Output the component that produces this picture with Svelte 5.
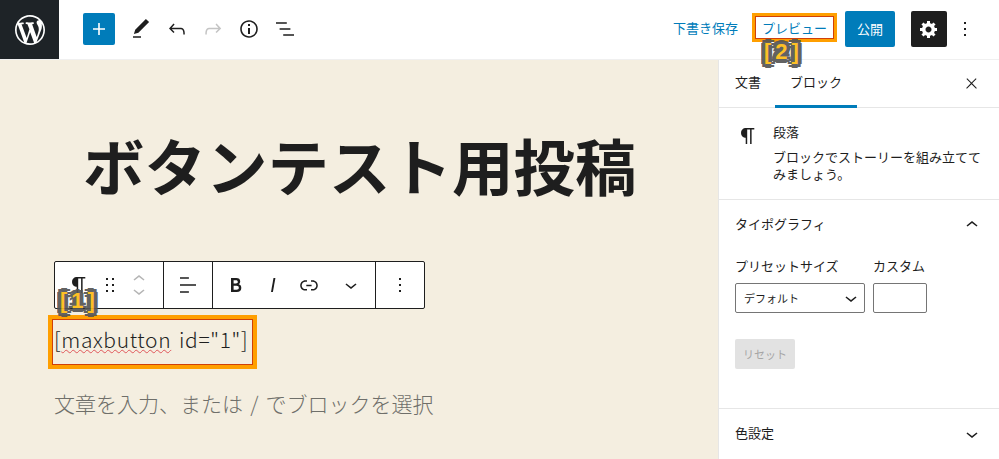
<script>
  const icons = {
    plus: "M18 11.2h-5.2V6h-1.6v5.2H6v1.6h5.2V18h1.6v-5.2H18z",
    pencil: "M20.1 5.1L16.9 2 6.2 12.7l-1.3 4.4 4.5-1.3L20.1 5.1zM4 20.8h8v-1.5H4v1.5z",
    undo: "M18.3 11.7c-.6-.6-1.4-.9-2.3-.9H6.7l2.9-3.3-1.1-1-4.5 5L8.5 16l1-1-2.7-2.7H16c.5 0 .9.2 1.3.5 1 1 1 3.4 1 4.5v.3h1.5v-.2c0-1.5 0-4.3-1.5-5.7z",
    redo: "M15.6 6.5l-1.1 1 2.9 3.3H8c-.9 0-1.7.3-2.3.9-1.4 1.5-1.4 4.2-1.4 5.6v.2h1.5v-.3c0-1.1 0-3.5 1-4.5.3-.3.7-.5 1.3-.5h9.2L14.5 15l1.1 1.1 4.6-4.6-4.6-5z",
    info: "M12 3.2c-4.8 0-8.8 3.9-8.8 8.8 0 4.8 3.9 8.8 8.8 8.8 4.8 0 8.8-3.9 8.8-8.8 0-4.8-4-8.8-8.8-8.8zm0 16c-4 0-7.2-3.3-7.2-7.2C4.8 8 8 4.8 12 4.8s7.2 3.3 7.2 7.2c0 4-3.2 7.2-7.2 7.2zM11 17h2v-6h-2v6zm0-8h2V7h-2v2z",
    list: "M13.8 5.2H3v1.5h10.8V5.2zm-3.6 12v1.5H21v-1.5H10.2zm7.2-6H6.6v1.5h10.8v-1.5z",
    more: "M13 19h-2v-2h2v2zm0-6h-2v-2h2v2zm0-6h-2V5h2v2z",
    close: "M13 11.8l6.1-6.3-1-1-6.1 6.2-6.1-6.2-1 1 6.1 6.3-6.5 6.7 1 1 6.5-6.6 6.5 6.6 1-1z",
    down: "M17.5 11.6L12 16l-5.5-4.4.9-1.2L12 14l4.5-3.6 1 1.2z",
    up: "M6.5 12.4L12 8l5.5 4.4-.9 1.2L12 10l-4.5 3.6-1-1.2z",
    para: "M18.3 4H9.9v-.1l-.9.2c-2.3.4-4 2.4-4 4.8s1.7 4.4 4 4.8l.7.1V20h1.5V5.5h2.9V20h1.5V5.5h2.7V4z",
    drag: "M8 7h2V5H8v2zm0 6h2v-2H8v2zm0 6h2v-2H8v2zm6-14v2h2V5h-2zm0 8h2v-2h-2v2zm0 6h2v-2h-2v2z",
    align: "M4 19.8h8.9v-1.5H4v1.5zm8.9-15.6H4v1.5h8.9V4.2zm-8.9 7v1.5h16v-1.5H4z",
    bold: "M14.7 11.3c1-.6 1.5-1.6 1.5-3 0-2.3-1.3-3.4-4-3.4H7v14h5.8c1.4 0 2.5-.3 3.3-1 .8-.7 1.2-1.7 1.2-2.9.1-1.9-.8-3.1-2.6-3.7zm-5.1-4h2.3c.6 0 1.1.1 1.4.4.3.3.5.7.5 1.2s-.2 1-.5 1.2c-.3.3-.8.4-1.4.4H9.6V7.3zm4.6 9c-.4.3-1 .4-1.7.4H9.6v-3.9h2.9c.7 0 1.3.2 1.7.5.4.3.6.8.6 1.5s-.2 1.2-.6 1.5z",
    italic: "M12.5 5L10 19h1.9l2.5-14z",
    link: "M15.6 7.2H14v1.5h1.6c2 0 3.7 1.7 3.7 3.7s-1.7 3.7-3.7 3.7H14v1.5h1.6c2.8 0 5.2-2.3 5.2-5.2 0-2.9-2.3-5.2-5.2-5.2zM4.7 12.4c0-2 1.7-3.7 3.7-3.7H10V7.2H8.4c-2.9 0-5.2 2.3-5.2 5.2 0 2.9 2.3 5.2 5.2 5.2H10v-1.5H8.4c-2 0-3.7-1.7-3.7-3.7zm4.6.9h5.3v-1.5H9.3v1.5z",
  };
</script>

{#snippet icon(name, size = 24)}
  <svg width={size} height={size} viewBox="0 0 24 24" fill="currentColor"><path d={icons[name]} /></svg>
{/snippet}

<div class="screen">
  <header class="topbar">
    <a class="logo" href="#top" aria-label="WordPress">
      <svg width="30" height="30" viewBox="0 0 20 20" fill="#fff"><path d="M20 10c0-5.51-4.49-10-10-10C4.48 0 0 4.49 0 10c0 5.52 4.48 10 10 10 5.51 0 10-4.48 10-10zM7.78 15.37L4.37 6.22c.55-.02 1.17-.08 1.17-.08.5-.06.44-1.13-.06-1.11 0 0-1.45.11-2.37.11-.18 0-.37 0-.58-.01C4.12 2.69 6.87 1.11 10 1.11c2.33 0 4.45.87 6.05 2.34-.68-.11-1.65.39-1.65 1.58 0 .74.45 1.36.9 2.1.35.61.55 1.36.55 2.46 0 1.49-1.4 5-1.4 5l-3.03-8.37c.54-.02.82-.17.82-.17.5-.05.44-1.25-.06-1.22 0 0-1.44.12-2.38.12-.87 0-2.33-.12-2.33-.12-.5-.03-.56 1.2-.06 1.22l.92.08 1.26 3.41zM17.41 10c.24-.64.74-1.87.43-4.25.7 1.29 1.05 2.71 1.05 4.25 0 3.29-1.73 6.24-4.4 7.78.97-2.59 1.94-5.2 2.92-7.78zM6.1 18.09C3.12 16.65 1.11 13.53 1.11 10c0-1.3.23-2.48.72-3.59C3.25 10.3 4.67 14.2 6.1 18.09zm4.03-6.63l2.58 6.98c-.86.29-1.76.45-2.71.45-.79 0-1.57-.11-2.29-.33.81-2.38 1.62-4.74 2.42-7.1z" /></svg>
    </a>
    <div class="tools">
      <button class="inserter">{@render icon("plus")}</button>
      <button class="tool">{@render icon("pencil")}</button>
      <button class="tool">{@render icon("undo")}</button>
      <button class="tool off">{@render icon("redo")}</button>
      <button class="tool">{@render icon("info")}</button>
      <button class="tool">{@render icon("list")}</button>
    </div>
    <div class="actions">
      <span class="draft">下書き保存</span>
      <span class="preview"><span class="preview-text">プレビュー</span>
        <span class="tag tag-2">[2]</span>
      </span>
      <button class="publish"><span>公開</span></button>
      <button class="settings">
        <svg width="20" height="20" viewBox="0 0 20 20" fill="currentColor"><path d="M18 12h-2.18c-.17.7-.44 1.35-.81 1.93l1.54 1.54-2.1 2.1-1.54-1.54c-.58.36-1.23.63-1.91.79V19H8v-2.18c-.68-.16-1.33-.43-1.91-.79l-1.54 1.54-2.12-2.12 1.54-1.54c-.36-.58-.63-1.23-.79-1.91H1V9.03h2.17c.16-.7.44-1.35.8-1.94L2.43 5.55l2.1-2.1 1.54 1.54c.58-.37 1.24-.64 1.93-.81V2h3v2.18c.68.16 1.33.43 1.91.79l1.54-1.54 2.12 2.12-1.54 1.54c.36.59.64 1.24.8 1.94H18V12zm-8.5 1.5c1.66 0 3-1.34 3-3s-1.34-3-3-3-3 1.34-3 3 1.34 3 3 3z" /></svg>
      </button>
      <button class="tool more">{@render icon("more")}</button>
    </div>
  </header>

  <div class="body">
    <main class="editor">
      <h1 class="title">ボタンテスト用投稿</h1>

      <div class="block-toolbar">
        <div class="group first">
          <span class="para">{@render icon("para")}</span>
          <span class="drag">{@render icon("drag")}</span>
          <span class="movers">
            {@render icon("up")}
            {@render icon("down")}
          </span>
        </div>
        <div class="group align">{@render icon("align")}</div>
        <div class="group formats">
          {@render icon("bold")}
          {@render icon("italic")}
          {@render icon("link")}
          <span class="format-more">{@render icon("down")}</span>
        </div>
        <div class="group last">{@render icon("more")}</div>
        <span class="tag tag-1">[1]</span>
      </div>

      <div class="shortcode">[<span class="misspelt">maxbutton</span> id="1"]</div>
      <p class="placeholder">文章を入力、または / でブロックを選択</p>
    </main>

    <aside class="sidebar">
      <div class="tabs">
        <span class="tab doc">文書</span>
        <span class="tab active">ブロック</span>
        <span class="tab-close">{@render icon("close", 17)}</span>
      </div>

      <section class="card">
        <span class="card-icon">{@render icon("para")}</span>
        <div>
          <div class="card-title">段落</div>
          <p class="card-desc">ブロックでストーリーを組み立ててみましょう。</p>
        </div>
      </section>

      <section class="panel">
        <div class="panel-head">
          <span>タイポグラフィ</span>
          {@render icon("up")}
        </div>
        <div class="fields">
          <div class="field">
            <span class="label">プリセットサイズ</span>
            <div class="select">デフォルト {@render icon("down")}</div>
          </div>
          <div class="field">
            <span class="label">カスタム</span>
            <div class="input"></div>
          </div>
        </div>
        <button class="reset">リセット</button>
      </section>

      <section class="panel closed">
        <div class="panel-head">
          <span>色設定</span>
          {@render icon("down")}
        </div>
      </section>
    </aside>
  </div>
</div>

<style>
  :global(body) {
    margin: 0;
  }

  .screen {
    width: 999px;
    height: 459px;
    overflow: hidden;
    display: flex;
    flex-direction: column;
    background: #fff;
    color: #1e1e1e;
    font-family: "Noto Sans CJK JP", "Noto Sans", sans-serif;
    font-size: 13px;
  }

  button {
    border: 0;
    padding: 0;
    background: none;
    color: inherit;
    font: inherit;
    display: flex;
    align-items: center;
    justify-content: center;
  }

  svg {
    display: block;
    flex: none;
  }

  .topbar {
    flex: none;
    height: 59px;
    display: flex;
    align-items: center;
    border-bottom: 1px solid #f0f0f0;
  }

  .logo {
    width: 59px;
    height: 59px;
    background: #1e2327;
    display: flex;
    align-items: center;
    justify-content: center;
  }

  .tools {
    display: flex;
    align-items: center;
    margin: 0 0 1px 24px;
  }

  .inserter {
    width: 32px;
    height: 32px;
    margin-right: 8px;
    border-radius: 2px;
    background: #007cba;
    color: #fff;
  }

  .tool {
    width: 36px;
    height: 36px;
  }

  .tool.off {
    color: #c4c4c4;
  }

  .actions {
    margin: 0 0 1px auto;
    display: flex;
    align-items: center;
  }

  .draft {
    color: #007cba;
    margin: 0 14px 3px 0;
  }

  .preview {
    position: relative;
    width: 85px;
    height: 29px;
    box-sizing: border-box;
    display: flex;
    align-items: center;
    justify-content: center;
    color: #007cba;
    border: 3px solid #ff9f00;
    box-shadow: inset 0 0 0 1px #d0400a;
    margin: 0 8px 3px 0;
  }

  .preview-text {
    margin-bottom: 1px;
  }

  .publish {
    width: 50px;
    height: 36px;
    border-radius: 2px;
    background: #007cba;
    color: #fff;
    margin-right: 16px;
  }

  .publish span {
    margin-bottom: 2px;
  }

  .settings {
    width: 36px;
    height: 36px;
    border-radius: 2px;
    background: #1e1e1e;
    color: #fff;
  }

  .more {
    width: 36px;
    margin-right: 16px;
  }

  .tag {
    position: absolute;
    font: 700 22px/22px "Liberation Sans", sans-serif;
    letter-spacing: 4px;
    color: #fdbb13;
    text-shadow:
      4px 0 #555, -4px 0 #555, 0 4px #555, 0 -4px #555,
      3px 3px #555, -3px 3px #555, 3px -3px #555, -3px -3px #555,
      2px 0 #555, -2px 0 #555, 0 2px #555, 0 -2px #555;
    opacity: 0.92;
    z-index: 2;
  }

  .tag-2 {
    left: 9px;
    top: 25px;
  }

  .tag-1 {
    left: 5px;
    top: 28px;
  }

  .body {
    flex: 1;
    min-height: 0;
    display: flex;
  }

  .editor {
    flex: 1;
    background: #f4eee0;
    padding: 67px 0 0 54px;
  }

  .title {
    margin: 0 0 0 29px;
    font-size: 61.5px;
    line-height: 76px;
    font-weight: 700;
    white-space: nowrap;
  }

  .block-toolbar {
    position: relative;
    margin-top: 58px;
    width: 371px;
    height: 48px;
    box-sizing: border-box;
    display: flex;
    background: #fff;
    border: 1px solid #1e1e1e;
    border-radius: 2px;
  }

  .group {
    display: flex;
    align-items: center;
    justify-content: center;
    border-right: 1px solid #1e1e1e;
  }

  .group.first {
    width: 108px;
    justify-content: flex-start;
  }

  .para {
    margin-left: 12px;
  }

  .drag {
    margin-left: 6.5px;
  }

  .movers {
    display: flex;
    flex-direction: column;
    color: #b5b5b5;
    margin-left: 5.5px;
  }

  .movers svg + svg {
    margin-top: -11.4px;
  }

  .group.align {
    width: 48px;
  }

  .group.formats {
    width: 163px;
    justify-content: flex-start;
    padding-left: 11px;
    gap: 12.5px;
    box-sizing: border-box;
  }

  .format-more {
    margin-left: 5.5px;
  }

  .group.last {
    flex: 1;
    border-right: 0;
  }

  .shortcode {
    position: relative;
    margin-top: 15px;
    font-size: 21px;
    font-weight: 300;
    line-height: 30px;
    letter-spacing: 0.65px;
    word-spacing: 2.5px;
    white-space: nowrap;
  }

  .shortcode::before {
    content: "";
    position: absolute;
    left: -6px;
    top: -9px;
    width: 209px;
    height: 54px;
    box-sizing: border-box;
    border: 4px solid #ff9f00;
    box-shadow: inset 0 0 0 1px #d0400a;
  }

  .misspelt {
    text-decoration: underline wavy #e0565a 1px;
    text-underline-offset: 1px;
  }

  .placeholder {
    margin: 34px 0 0;
    font-size: 21px;
    font-weight: 300;
    line-height: 30px;
    word-spacing: 2.5px;
    color: #6f6f6a;
    white-space: nowrap;
  }

  .sidebar {
    flex: none;
    width: 280px;
    border-left: 1px solid #e6e6e6;
    background: #fff;
  }

  .tabs {
    height: 48px;
    box-sizing: border-box;
    display: flex;
    align-items: flex-start;
    border-bottom: 1px solid #e6e6e6;
  }

  .tab {
    flex: none;
    display: flex;
    align-items: center;
    justify-content: center;
    width: 82px;
    height: 48px;
    padding-bottom: 5px;
    box-sizing: border-box;
  }

  .tab.doc {
    width: 56px;
    justify-content: flex-start;
    padding-left: 16px;
  }

  .tab.active {
    border-bottom: 3px solid #007cba;
    padding-bottom: 2px;
  }

  .tab-close {
    margin: 15px 19px 0 auto;
    display: flex;
    align-items: center;
  }

  .card {
    height: 92px;
    box-sizing: border-box;
    padding: 15px 16px;
    display: flex;
    gap: 13px;
    border-bottom: 1px solid #e6e6e6;
  }

  .card-icon {
    margin: 1px 0 0 1px;
  }

  .card-title {
    line-height: 18px;
    margin-bottom: 7px;
  }

  .card-desc {
    margin: 0;
    line-height: 17px;
  }

  .panel {
    padding: 0 16px;
    height: 209px;
    box-sizing: border-box;
    border-bottom: 1px solid #e6e6e6;
  }

  .panel.closed {
    border: 0;
  }

  .panel-head {
    height: 50px;
    display: flex;
    align-items: center;
    justify-content: space-between;
    margin-right: -1px;
  }

  .panel-head span {
    margin-bottom: 3px;
  }

  .fields {
    display: flex;
    gap: 8px;
    margin-top: 7px;
  }

  .field {
    display: flex;
    flex-direction: column;
    gap: 8px;
  }

  .label {
    line-height: 18px;
  }

  .select {
    width: 130px;
    height: 30px;
    box-sizing: border-box;
    display: flex;
    align-items: center;
    justify-content: space-between;
    padding: 0 1px 0 8px;
    font-size: 11px;
    border: 1px solid #757575;
    border-radius: 2px;
  }

  .input {
    width: 54px;
    height: 30px;
    box-sizing: border-box;
    border: 1px solid #757575;
    border-radius: 2px;
  }

  .reset {
    width: 60px;
    height: 30px;
    margin-top: 26px;
    background: #e2e2e2;
    color: #a5a5a5;
    font-size: 11px;
    border-radius: 2px;
  }
</style>
